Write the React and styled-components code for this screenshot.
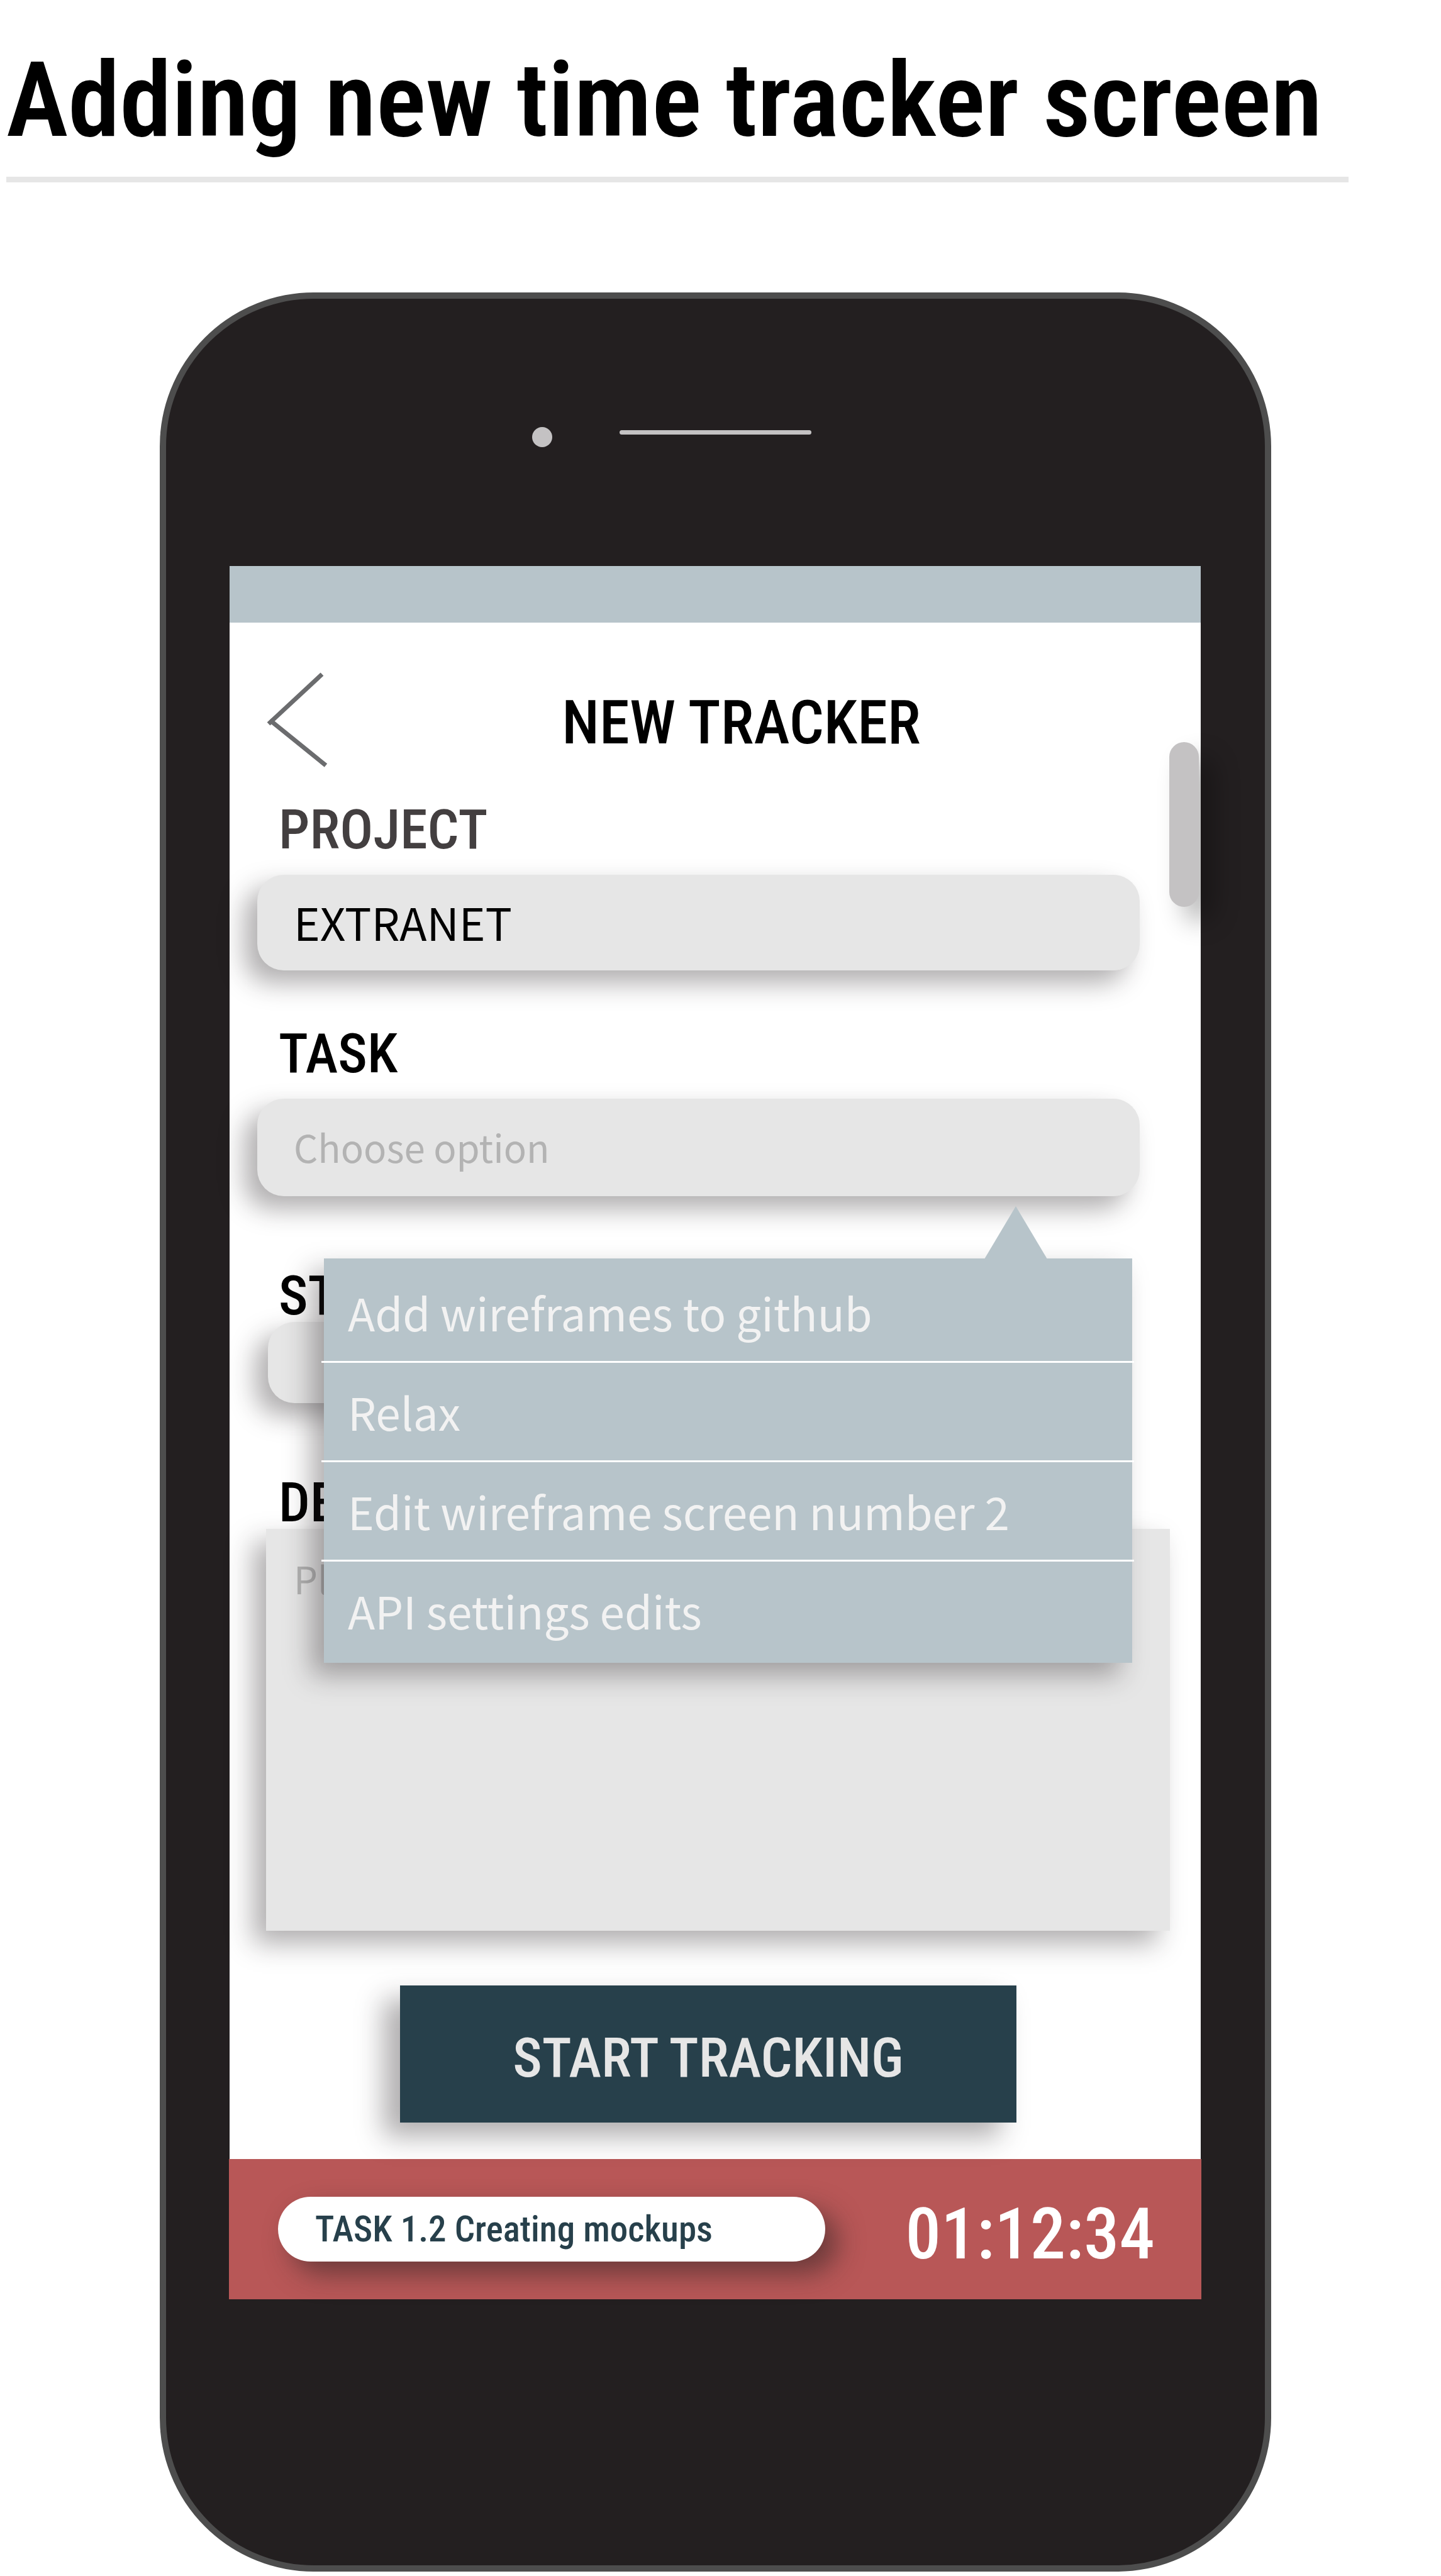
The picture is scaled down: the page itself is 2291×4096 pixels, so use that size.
import React, { useState } from 'react';
import styled, { createGlobalStyle } from 'styled-components';

const heading = '"Roboto Condensed", Roboto, "Liberation Sans", sans-serif';
const body = '"Noto Sans CJK SC", "Noto Sans", sans-serif';
const shadow = '-20px 20px 40px rgba(35, 31, 32, 0.36)';

const Global = createGlobalStyle`
  *, *::before, *::after { box-sizing: border-box; }
  body { margin: 0; background: #fff; color: #000; font-family: ${body}; }
  h1, h2, p, ul { margin: 0; padding: 0; }
`;

const Page = styled.main`
  display: flex;
  flex-direction: column;
`;

const PageHeader = styled.header`
  margin: 0 147px 0 10px;
  padding: 65px 0 26px;
  border-bottom: 9px solid #e6e6e6;
`;

const PageTitle = styled.h1`
  font: 600 166px/190px ${heading};
  white-space: nowrap;
`;

const Phone = styled.section`
  margin: 175px 270px 0 254px;
  padding: 0 102px 423px 101px;
  border: 10px solid #4d4d4d;
  border-radius: 245px;
  background: #231f20;
`;

const Earpiece = styled.div`
  display: flex;
  align-items: flex-start;
  gap: 107px;
  height: 425px;
  padding: 204px 0 0 481px;
`;

const Camera = styled.span`
  width: 32px;
  height: 32px;
  border-radius: 50%;
  background: #c4c2c3;
`;

const Speaker = styled.span`
  width: 305px;
  height: 7px;
  margin-top: 5px;
  border-radius: 4px;
  background: #c4c2c3;
`;

const Screen = styled.div`
  position: relative;
  background: #fff;
`;

const StatusBar = styled.div`
  height: 90px;
  background: #b7c4ca;
`;

const ScreenHeader = styled.header`
  display: flex;
  align-items: center;
  padding: 81px 74px 52px 61px;
`;

const BackButton = styled.button`
  width: 96px;
  height: 156px;
  padding: 0;
  border: 0;
  background: none;
  svg { display: block; overflow: visible; }
`;

const ScreenTitle = styled.h2`
  flex: 1;
  font: 500 97px/98px ${heading};
  text-align: center;
`;

const Scrollbar = styled.div`
  position: absolute;
  top: 280px;
  right: 3px;
  width: 47px;
  height: 262px;
  border-radius: 24px;
  background: #c4c2c3;
  box-shadow: 24px 24px 40px rgba(0, 0, 0, 0.3);
`;

const Field = styled.div`
  position: relative;
  display: flex;
  flex-direction: column;
  gap: ${(p) => (p.$tight ? 2 : 32)}px;
  margin-top: ${(p) => p.$space || 0}px;
`;

const Label = styled.label`
  padding-left: 78px;
  font: 500 88px/80px ${heading};
  color: ${(p) => (p.$muted ? '#433f40' : '#000')};
`;

const Select = styled.select`
  appearance: none;
  height: ${(p) => p.$height}px;
  margin: 0 97px 0 44px;
  padding: 0 58px 5px;
  border: 0;
  border-radius: 42px;
  background: #e6e6e6;
  box-shadow: ${shadow};
  font-family: ${body};
  font-size: ${(p) => (p.$empty ? 60 : 71)}px;
  color: ${(p) => (p.$empty ? '#b3b3b3' : '#000')};
`;

const TimeInput = styled.input`
  height: 129px;
  margin: 0 130px 0 61px;
  padding: 0 58px;
  border: 0;
  border-radius: 42px;
  background: #e6e6e6;
  box-shadow: ${shadow};
  font-family: ${body};
  font-size: 60px;
`;

const TextArea = styled.textarea`
  height: 639px;
  margin: 0 49px 0 58px;
  padding: 34px 44px;
  border: 0;
  resize: none;
  background: #e6e6e6;
  box-shadow: ${shadow};
  font: 60px/88px ${body};
  &::placeholder { color: #b3b3b3; }
`;

const Menu = styled.ul`
  position: absolute;
  z-index: 2;
  top: 366px;
  left: 150px;
  right: 109px;
  list-style: none;
  background: #b7c4ca;
  box-shadow: ${shadow};
  && { padding: 8px 0 3px; }
  &::before {
    content: '';
    position: absolute;
    top: -83px;
    right: 135px;
    width: 100px;
    height: 84px;
    background: #b7c4ca;
    clip-path: polygon(50% 0, 100% 100%, 0 100%);
  }
`;

const MenuItem = styled.li`
  position: relative;
  &:not(:last-child)::after {
    content: '';
    position: absolute;
    left: -4px;
    right: -3px;
    bottom: 0;
    height: 3px;
    background: #fff;
  }
`;

const MenuButton = styled.button`
  display: block;
  width: 100%;
  height: 158px;
  padding: 0 38px 4px;
  border: 0;
  background: none;
  text-align: left;
  font: 71px/100px ${body};
  color: #f2f2f2;
`;

const Actions = styled.div`
  display: flex;
  padding: 87px 293px 58px 271px;
`;

const StartButton = styled.button`
  flex: 1;
  height: 218px;
  padding: 12px 0 0;
  border: 0;
  background: #27404b;
  box-shadow: -26px 22px 40px rgba(35, 31, 32, 0.36);
  font: 500 88px/92px ${heading};
  color: #e6e6e6;
`;

const Footer = styled.footer`
  display: flex;
  align-items: flex-start;
  justify-content: space-between;
  margin: 0 -1px;
  padding: 60px 74px 44px 78px;
  background: #b85757;
`;

const CurrentTask = styled.p`
  width: 870px;
  border-radius: 52px;
  background: #fff;
  box-shadow: 20px 20px 40px rgba(35, 31, 32, 0.5);
  font: 500 57px/103px ${heading};
  color: #27404b;
  && { padding: 0 59px; }
`;

const Timer = styled.time`
  font: 500 113px/119px ${heading};
  color: #fff;
`;

const tasks = [
  'Add wireframes to github',
  'Relax',
  'Edit wireframe screen number 2',
  'API settings edits',
];

export default function App() {
  const [task, setTask] = useState('');
  return (
    <Page>
      <Global />
      <PageHeader>
        <PageTitle>Adding new time tracker screen</PageTitle>
      </PageHeader>
      <Phone>
        <Earpiece>
          <Camera />
          <Speaker />
        </Earpiece>
        <Screen>
          <StatusBar />
          <ScreenHeader>
            <BackButton type="button" aria-label="Back">
              <svg width="96" height="156" viewBox="0 0 96 156" fill="none" stroke="#6b6c6e" strokeWidth="7">
                <path d="M86 1 L1 80" />
                <path d="M3 74 L92 146" />
              </svg>
            </BackButton>
            <ScreenTitle>NEW TRACKER</ScreenTitle>
          </ScreenHeader>
          <Scrollbar />
          <form onSubmit={(e) => e.preventDefault()}>
            <Field>
              <Label htmlFor="project" $muted>PROJECT</Label>
              <Select id="project" $height={152}>
                <option>EXTRANET</option>
              </Select>
            </Field>
            <Field $space={92}>
              <Label htmlFor="task">TASK</Label>
              <Select
                id="task"
                $height={155}
                $empty={!task}
                value={task}
                onChange={(e) => setTask(e.target.value)}
              >
                <option value="">Choose option</option>
                {tasks.map((t) => <option key={t}>{t}</option>)}
              </Select>
              <Menu>
                {tasks.map((t) => (
                  <MenuItem key={t}>
                    <MenuButton type="button" onClick={() => setTask(t)}>{t}</MenuButton>
                  </MenuItem>
                ))}
              </Menu>
            </Field>
            <Field $space={118} $tight>
              <Label htmlFor="start">START</Label>
              <TimeInput id="start" type="text" />
            </Field>
            <Field $space={118} $tight>
              <Label htmlFor="description">DESCRIPTION</Label>
              <TextArea id="description" placeholder="Please describe" />
            </Field>
            <Actions>
              <StartButton type="submit">START TRACKING</StartButton>
            </Actions>
          </form>
          <Footer>
            <CurrentTask>TASK 1.2 Creating mockups</CurrentTask>
            <Timer>01:12:34</Timer>
          </Footer>
        </Screen>
      </Phone>
    </Page>
  );
}
